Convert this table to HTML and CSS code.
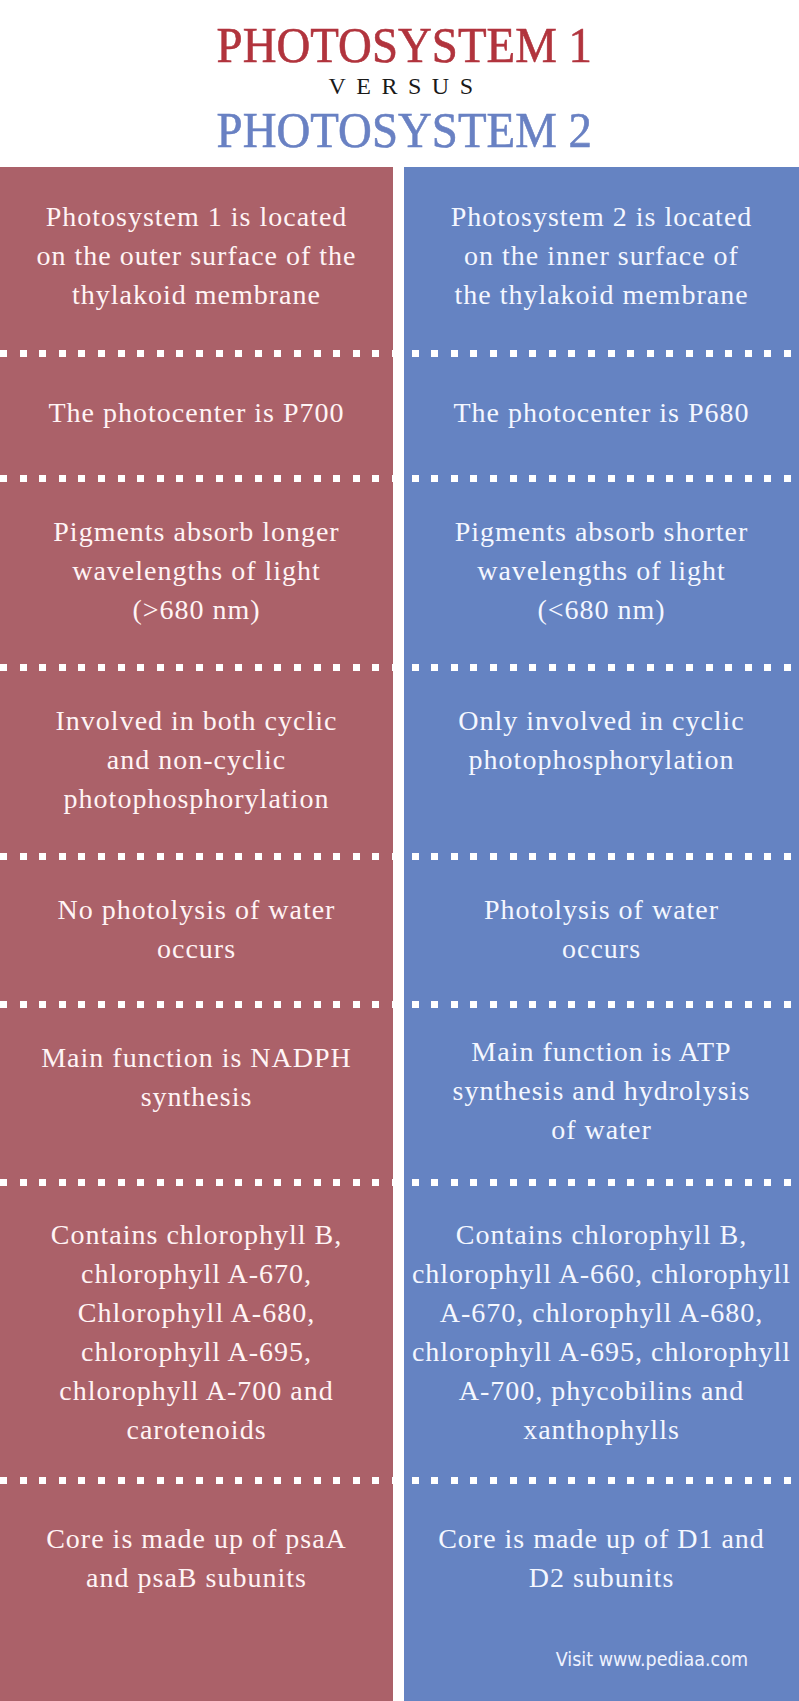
FILE: index.html
```html
<!DOCTYPE html>
<html lang="en">
<head>
<meta charset="utf-8">
<title>Photosystem 1 versus Photosystem 2</title>
<link rel="stylesheet" href="styles.css">
</head>
<body>
<main class="page">
  <header class="header">
    <h1 class="title title--one"><span class="title__text">PHOTOSYSTEM 1</span></h1>
    <p class="versus">VERSUS</p>
    <h2 class="title title--two"><span class="title__text">PHOTOSYSTEM 2</span></h2>
  </header>

  <section class="board">
    <div class="row row--first">
      <p class="cell">Photosystem 1 is located<br>on the outer surface of the<br>thylakoid membrane</p>
      <p class="cell">Photosystem 2 is located<br>on the inner surface of<br>the thylakoid membrane</p>
    </div>
    <div class="sep"></div>
    <div class="row row--airy">
      <p class="cell">The photocenter is P700</p>
      <p class="cell">The photocenter is P680</p>
    </div>
    <div class="sep"></div>
    <div class="row row--loose">
      <p class="cell">Pigments absorb longer<br>wavelengths of light<br>(&gt;680 nm)</p>
      <p class="cell">Pigments absorb shorter<br>wavelengths of light<br>(&lt;680 nm)</p>
    </div>
    <div class="sep"></div>
    <div class="row row--loose">
      <p class="cell">Involved in both cyclic<br>and non-cyclic<br>photophosphorylation</p>
      <p class="cell">Only involved in cyclic<br>photophosphorylation</p>
    </div>
    <div class="sep"></div>
    <div class="row">
      <p class="cell">No photolysis of water<br>occurs</p>
      <p class="cell">Photolysis of water<br>occurs</p>
    </div>
    <div class="sep"></div>
    <div class="row row--tight">
      <p class="cell cell--low">Main function is NADPH<br>synthesis</p>
      <p class="cell">Main function is ATP<br>synthesis and hydrolysis<br>of water</p>
    </div>
    <div class="sep"></div>
    <div class="row row--long">
      <p class="cell">Contains chlorophyll B,<br>chlorophyll A-670,<br>Chlorophyll A-680,<br>chlorophyll A-695,<br>chlorophyll A-700 and<br>carotenoids</p>
      <p class="cell">Contains chlorophyll B,<br>chlorophyll A-660, chlorophyll<br>A-670, chlorophyll A-680,<br>chlorophyll A-695, chlorophyll<br>A-700, phycobilins and<br>xanthophylls</p>
    </div>
    <div class="sep"></div>
    <div class="row row--last">
      <p class="cell">Core is made up of psaA<br>and psaB subunits</p>
      <p class="cell">Core is made up of D1 and<br>D2 subunits</p>
    </div>
    <footer class="footer">
      <span class="footer__spacer"></span>
      <p class="credit">Visit www.pediaa.com</p>
    </footer>
  </section>
</main>
</body>
</html>
```

FILE: styles.css
```css
* {
  box-sizing: border-box;
}

html,
body {
  margin: 0;
  padding: 0;
  background: #ffffff;
}

.page {
  width: 799px;
  min-height: 1701px;
  display: flex;
  flex-direction: column;
  font-family: "Liberation Serif", "Times New Roman", serif;
}

/* ---------- header ---------- */
.header {
  height: 167px;
  padding: 17px 0 0 10px;
  display: flex;
  flex-direction: column;
  align-items: center;
}

.title {
  margin: 0;
  font-size: 50px;
  line-height: 56px;
  font-weight: 400;
  white-space: nowrap;
}

.title__text {
  display: inline-block;
  transform: scaleX(0.937);
  -webkit-text-stroke: 0.6px currentColor;
}

.title--one {
  color: #b1343d;
}

.title--two {
  color: #6981c3;
}

.versus {
  margin: 0 0 2px;
  padding-left: 3px;
  font-size: 24px;
  line-height: 27px;
  letter-spacing: 10.5px;
  color: #1a1a1a;
}

/* ---------- comparison board ---------- */
.board {
  flex: 1;
  display: flex;
  flex-direction: column;
  background: linear-gradient(to right,
    #ab6169 0, #ab6169 393px,
    #ffffff 393px, #ffffff 404px,
    #6583c2 404px, #6583c2 100%);
}

.row {
  display: grid;
  grid-template-columns: 393px 395px;
  column-gap: 11px;
  padding: 30px 0 33px;
}

.row--first {
  padding: 30px 0 36px;
}

.row--airy {
  padding: 36px 0 43px;
}

.row--loose {
  padding: 30px 0 35px;
}

.row--tight {
  padding: 24px 0 30px;
}

.row--long {
  padding: 29px 0 28px;
}

.row--last {
  padding: 35px 0 0;
}

.cell {
  margin: 0;
  padding: 0 4px;
  text-align: center;
  white-space: nowrap;
  font-size: 28px;
  line-height: 39px;
  letter-spacing: 1px;
  color: #fff4f5;
}

.cell + .cell {
  color: #f4f7ff;
}

.cell--low {
  padding-top: 6px;
}

.sep {
  height: 7px;
  background: repeating-linear-gradient(to right,
    #ffffff 0, #ffffff 7px,
    transparent 7px, transparent 19.6px);
}

.footer {
  flex: 1;
  display: grid;
  grid-template-columns: 393px 395px;
  column-gap: 11px;
  padding-top: 51px;
}

.credit {
  margin: 0;
  padding-right: 51px;
  text-align: right;
  font-family: "DejaVu Sans Condensed", "DejaVu Sans", sans-serif;
  font-size: 19.5px;
  line-height: 24px;
  color: #eef2ff;
}
```
